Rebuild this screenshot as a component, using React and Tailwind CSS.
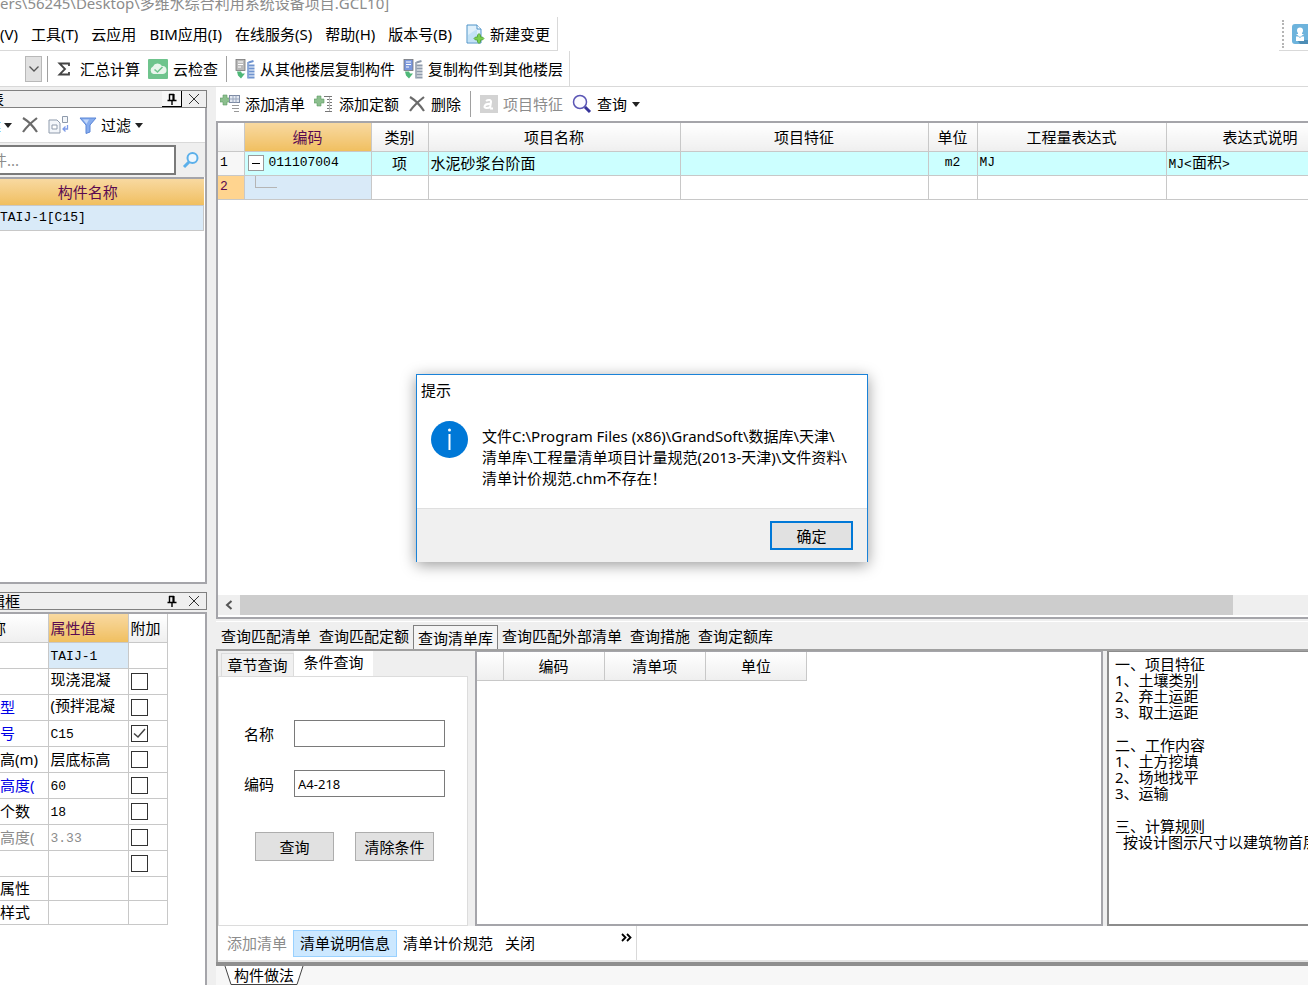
import React, { useState } from "react";
import clsx from "clsx";

const MENU_LEFT = ["工具(T)", "云应用", "BIM应用(I)", "在线服务(S)", "帮助(H)", "版本号(B)"];

const GRID_COLUMNS = [
  { title: "编码", width: 127, active: true },
  { title: "类别", width: 57 },
  { title: "项目名称", width: 252 },
  { title: "项目特征", width: 248 },
  { title: "单位", width: 49 },
  { title: "工程量表达式", width: 189 },
  { title: "表达式说明", width: 188 },
];

const PROPERTIES = [
  { name: "", value: "TAIJ-1", selected: true },
  { name: "", value: "现浇混凝", extra: false, wrapped: true },
  { name: "型", value: "(预拌混凝", extra: false, link: true, wrapped: true },
  { name: "号", value: "C15", extra: true, link: true },
  { name: "高(m)", value: "层底标高", extra: false },
  { name: "高度(", value: "60", extra: false, link: true },
  { name: "个数", value: "18", extra: false },
  { name: "高度(", value: "3.33", extra: false, muted: true },
  { name: "", value: "", extra: false },
  { name: "属性", value: "", short: true },
  { name: "样式", value: "", short: true },
];

const QUERY_TABS = ["查询匹配清单", "查询匹配定额", "查询清单库", "查询匹配外部清单", "查询措施", "查询定额库"];

const NOTES = [
  ["一、项目特征", "1、土壤类别", "2、弃土运距", "3、取土运距"],
  ["二、工作内容", "1、土方挖填", "2、场地找平", "3、运输"],
];

const MONO = "font-['Liberation_Mono','Noto_Sans_CJK_SC',monospace]";

/* ---------- icons ---------- */

const NewDocIcon = () => (
  <svg width="20" height="20" viewBox="0 0 20 20">
    <path d="M2 1h10l4 4v14H2z" fill="#dff0fb" stroke="#4f93c8" />
    <path d="M12 1v4h4" fill="#fff" stroke="#4f93c8" />
    <path d="M3 11l9-6v13H3z" fill="#c3e2f6" />
    <path d="M14 9.500l1.500 1.500v2h2l1.500 1.500-1.500 1.500h-2v2L14 19.500 12.500 18v-2h-2L9 14.500l1.500-1.500h2v-2z" fill="#7ccf4e" stroke="#4a9e33" strokeWidth=".8" />
  </svg>
);

const CloudCheckIcon = () => (
  <svg width="20" height="20" viewBox="0 0 20 20">
    <rect width="20" height="20" rx="1" fill="#6fc48d" />
    <path d="M5.500 15a4 4 0 0 1-.5-7.500A5 5 0 0 1 14 7a4 4 0 0 1 1 8z" fill="#e9f5ec" />
    <path d="M6.500 10.500l3 2.500 5-5" fill="none" stroke="#6fc48d" strokeWidth="1.600" />
  </svg>
);

const CopyFromIcon = ({ page, stack }) => (
  <svg width="20" height="20" viewBox="0 0 20 20">
    <rect x="1" y=".5" width="9" height="11" fill={page} stroke="#777" strokeWidth=".8" />
    <path d="M3 3h5M3 5.500h5M3 8h3" stroke="#fff" />
    <path d="M2 12.500h4l1 2h3l-4 5-3-3z" fill="#4fb878" />
    <path d="M13.500 3.500l5-1.500M13.500 6.500h6M13.500 9.500h6M13.500 12.500h6M13.500 15.500h6M13.500 18.500h6" stroke={stack} strokeWidth="2" />
    <path d="M13 3v16.500" stroke={stack} strokeWidth="1.500" />
  </svg>
);

const AddListIcon = () => (
  <svg width="20" height="20" viewBox="0 0 20 20">
    <path d="M3 1h4v3h3v4H7v3H3V8H0V4h3z" fill="#8cbf8e" stroke="#5f9a66" strokeWidth=".6" />
    <rect x="9.500" y="1.500" width="10" height="7" fill="#e4e9f2" stroke="#7d8aa3" />
    <path d="M9.500 5h10M13 1.500v7M16 1.500v7" stroke="#9aa7bd" />
    <path d="M12 11.500h7M12 14.500h7M14 17.500h5" stroke="#999" />
  </svg>
);

const AddQuotaIcon = () => (
  <svg width="20" height="20" viewBox="0 0 20 20">
    <path d="M3 2h4v3h3v4H7v3H3V9H0V5h3z" fill="#8cbf8e" stroke="#5f9a66" strokeWidth=".6" />
    <path d="M10 2.500h8M13 5.500h5M13 8.500h5M13 11.500h5M13 14.500h5M11 17.500h7" stroke="#777" />
    <path d="M15.500 3v14" stroke="#bbb" />
  </svg>
);

const CrossIcon = () => (
  <svg width="18" height="18" viewBox="0 0 18 18">
    <path d="M2 2c5 3 10 8 14 14M16 2C11 6 6 10 2 16" fill="none" stroke="#6b6b6b" strokeWidth="2.200" />
  </svg>
);

const FeatureIcon = () => (
  <svg width="18" height="18" viewBox="0 0 18 18">
    <rect width="18" height="18" fill="#d3d3d3" />
    <path d="M6 6c2-1.500 5.500-1.500 5 1l-1 6.500M11 9c-4-.5-6 .8-6.500 2.500s3.500 2.500 6 0M10 13.500h3" fill="none" stroke="#fff" strokeWidth="2" />
  </svg>
);

const MagnifierIcon = () => (
  <svg width="20" height="20" viewBox="0 0 20 20">
    <circle cx="8" cy="8" r="6.500" fill="#fbfbff" stroke="#5a55b5" strokeWidth="1.500" />
    <path d="M13 13l5 5" stroke="#37349a" strokeWidth="3" />
  </svg>
);

const SearchIcon = () => (
  <svg width="18" height="18" viewBox="0 0 18 18">
    <circle cx="10.500" cy="7" r="5" fill="#eef7fe" stroke="#5cb0ea" strokeWidth="2" />
    <path d="M7 11l-5 5" stroke="#5cb0ea" strokeWidth="3" />
  </svg>
);

const CopyPagesIcon = () => (
  <svg width="22" height="20" viewBox="0 0 22 20">
    <path d="M1 5h8l3 3v10H1z" fill="#f3f6fa" stroke="#8f9bac" />
    <path d="M4 10h5v4H4z" fill="#fff" stroke="#8f9bac" />
    <path d="M14.500 1.500h5v6h-5z" fill="#f3f6fa" stroke="#8f9bac" />
    <path d="M19.500 10v4h-4M17.500 11.500L15 14l2.500 2.500" fill="none" stroke="#7d9be8" strokeWidth="1.300" />
  </svg>
);

const FunnelIcon = () => (
  <svg width="18" height="18" viewBox="0 0 18 18">
    <path d="M1 2h16l-6 7v7l-4 1.500V9z" fill="#86acee" stroke="#5b86d6" />
    <path d="M4 3.500h6L7.500 8z" fill="#c4d8fa" />
  </svg>
);

const PinIcon = () => (
  <svg width="10" height="12" viewBox="0 0 10 12">
    <path d="M2.500 1v6M2 1.500h5M.5 7.500h9M5 8v4" fill="none" stroke="#000" strokeWidth="1.400" />
    <path d="M6.500 1v6" stroke="#000" strokeWidth="2.200" />
  </svg>
);

const CloseIcon = () => (
  <svg width="10" height="10" viewBox="0 0 10 10">
    <path d="M0 0l10 10M10 0L0 10" stroke="#333" />
  </svg>
);

const CaretIcon = () => (
  <svg width="8" height="5" viewBox="0 0 8 5">
    <path d="M0 0h8L4 5z" fill="#222" />
  </svg>
);

const SigmaIcon = () => (
  <svg width="19" height="14" viewBox="0 0 19 14">
    <path d="M13 4V1.500H3.500L9 7l-5.500 5.500H13V10" fill="none" stroke="#444" strokeWidth="1.800" />
  </svg>
);

const DownloadIcon = () => (
  <svg width="20" height="20" viewBox="0 0 20 20" className="shrink-0">
    <rect width="20" height="20" rx="3" fill="#6db3dc" />
    <path d="M5 16h12l3 4H8z" fill="#4d8db5" />
    <circle cx="8" cy="6.500" r="3" fill="#fff" />
    <path d="M6 7h4v3h2l-4 3-4-3h2zM4 12.500h2.500L8 14l1.500-1.500H12V17H4z" fill="#fff" />
  </svg>
);

/* ---------- shared bits ---------- */

const ToolButton = ({ icon, children, className, disabled }) => (
  <button disabled={disabled} className={clsx("flex shrink-0 items-center gap-[5px] whitespace-nowrap", className)}>
    {icon}
    <span>{children}</span>
  </button>
);

const Separator = () => <div className="h-[26px] w-px shrink-0 bg-[#a0a0a0]" />;

const PanelHeader = ({ children, raised }) => (
  <div className="flex h-[18px] shrink-0 items-center justify-between border border-l-0 border-[#808080] bg-[#efefef]">
    <div className="flex h-4 items-center overflow-hidden leading-4 whitespace-nowrap">{children}</div>
    <div className="flex h-full items-center">
      <button
        aria-label="固定"
        className={clsx("flex h-full w-5 items-center justify-center", raised && "border-r border-b border-black bg-[#f7f7f7]")}
      >
        <PinIcon />
      </button>
      <button aria-label="关闭面板" className="flex h-full w-6 items-center justify-center">
        <CloseIcon />
      </button>
    </div>
  </div>
);

/* ---------- top bars ---------- */

const TopBars = () => (
  <header className="shrink-0 bg-white">
    <div className="mb-1 flex h-[13px] items-end overflow-hidden leading-5 whitespace-nowrap text-[#8c8c8c]">
      ers\56245\Desktop\多维水综合利用系统设备项目.GCL10]
    </div>
    <div className="flex h-[34px] justify-between">
      <nav className="flex items-center gap-[13px] border-r border-b border-[#d9d9d9] pr-[7px] whitespace-nowrap">
        <button>(V)</button>
        {MENU_LEFT.map((item) => (
          <button key={item}>{item}</button>
        ))}
        <ToolButton icon={<NewDocIcon />}>新建变更</ToolButton>
      </nav>
      <div className="flex w-[29px] items-center gap-2 overflow-hidden border-b border-[#d9d9d9] pl-[3px]">
        <div className="h-7 shrink-0 border-l-2 border-dotted border-[#b5b5b5]" />
        <DownloadIcon />
      </div>
    </div>
    <div className="flex h-9 border-b border-[#d9d9d9]">
      <div className="flex items-center gap-2 border-r border-[#d9d9d9] pr-[6px]">
        <div className="flex items-center gap-[5px]">
          <button aria-label="展开" className="ml-[25px] flex h-[26px] w-[17px] items-center justify-center border border-[#b8b8b8] bg-[#e1e1e1]">
            <svg width="10" height="6" viewBox="0 0 10 6">
              <path d="M.5.5L5 5 9.500.5" fill="none" stroke="#555" strokeWidth="1.300" />
            </svg>
          </button>
          <Separator />
        </div>
        <ToolButton icon={<SigmaIcon />}>汇总计算</ToolButton>
        <ToolButton icon={<CloudCheckIcon />}>云检查</ToolButton>
        <Separator />
        <ToolButton icon={<CopyFromIcon page="#b9b9b9" stack="#6f93cf" />}>从其他楼层复制构件</ToolButton>
        <ToolButton icon={<CopyFromIcon page="#7a97dc" stack="#8f9bab" />}>复制构件到其他楼层</ToolButton>
      </div>
    </div>
  </header>
);

/* ---------- left side ---------- */

const ComponentPanel = () => (
  <section className="flex flex-1 flex-col overflow-hidden">
    <PanelHeader raised>
      <span className="flex w-1 justify-end overflow-hidden">表</span>
    </PanelHeader>
    <div className="flex flex-1 flex-col border-r-2 border-b-2 border-[#a5a5aa] bg-white">
      <div className="flex h-[35px] items-center gap-[9px] border-b border-[#d9d9d9]">
        <button className="flex items-center gap-[3px]">
          <span className="flex w-px justify-end overflow-hidden text-[#1b6fb5]">建</span>
          <CaretIcon />
        </button>
        <button aria-label="删除构件">
          <CrossIcon />
        </button>
        <button aria-label="复制构件">
          <CopyPagesIcon />
        </button>
        <button className="flex items-center gap-1">
          <FunnelIcon />
          <span>过滤</span>
          <CaretIcon />
        </button>
      </div>
      <div className="flex h-[34px] items-center bg-[#efefef]">
        <div className="flex h-[30px] flex-1 items-center overflow-hidden border-2 border-l-0 border-[#7a7a7a] bg-white">
          <input
            aria-label="搜索构件"
            placeholder="件..."
            className="-ml-2 w-full min-w-0 outline-none placeholder:text-[#8c8c8c]"
          />
        </div>
        <button aria-label="搜索" className="flex w-[29px] items-center justify-center">
          <SearchIcon />
        </button>
      </div>
      <table className="w-[204px] table-fixed border-collapse border-t-2 border-[#a5a5aa]">
        <thead>
          <tr className="h-[27px]">
            <th className="bg-linear-to-b from-[#f8d9a0] to-[#f0bf5f] pr-7 font-normal text-[#5a0a50]">构件名称</th>
          </tr>
        </thead>
        <tbody>
          <tr className="h-[25px]">
            <td className={clsx("border border-l-0 border-[#c8c8c8] bg-[#d9eaf8] text-[13px]", MONO)}>TAIJ-1[C15]</td>
          </tr>
        </tbody>
      </table>
    </div>
  </section>
);

const PropertyPanel = () => (
  <section className="flex h-[393px] shrink-0 flex-col">
    <PanelHeader>
      <span className="flex w-[20px] justify-end overflow-hidden">辑框</span>
    </PanelHeader>
    <div className="mt-[2px] flex-1 border-t-2 border-r-2 border-[#a5a5aa] bg-white">
      <table className="w-[167px] table-fixed border-collapse">
        <colgroup>
          <col className="w-12" />
          <col className="w-20" />
          <col className="w-[39px]" />
        </colgroup>
        <thead>
          <tr className="h-7">
            <th className="border-r border-b border-[#c8c8c8] bg-linear-to-b from-white to-[#efefef] font-normal">
              <span className="flex w-[6px] justify-end overflow-hidden">称</span>
            </th>
            <th className="border border-t-0 border-[#c8c8c8] bg-linear-to-b from-[#f8d9a0] to-[#f0bf5f] pl-[2px] text-left font-normal text-[#5a0a50]">
              属性值
            </th>
            <th className="border border-t-0 border-[#c8c8c8] bg-linear-to-b from-white to-[#efefef] pl-[2px] text-left font-normal">附加</th>
          </tr>
        </thead>
        <tbody>
          {PROPERTIES.map((row, i) => (
            <tr key={i} className={row.short ? "h-6" : "h-[26px]"}>
              <td
                className={clsx(
                  "overflow-hidden border-r border-b border-[#c8c8c8] p-0 leading-5 whitespace-nowrap",
                  row.link && "text-[#0000e6]",
                  row.muted && "text-[#8c8c8c]",
                )}
              >
                {row.name}
              </td>
              <td
                className={clsx(
                  "overflow-hidden border border-[#c8c8c8] p-0 pl-[2px] leading-5 whitespace-nowrap",
                  row.selected && "bg-[#d9eaf8]",
                  row.muted && "text-[#8c8c8c]",
                  row.wrapped && "align-top",
                )}
              >
                <span className={/^[\x20-\x7e]*$/.test(row.value) ? `${MONO} text-[13px]` : ""}>{row.value}</span>
              </td>
              <td className="border border-[#c8c8c8] p-0 pl-[2px]">
                {row.extra !== undefined && (
                  <div className="grid">
                    <input
                      type="checkbox"
                      aria-label={`附加 ${row.value}`}
                      defaultChecked={row.extra}
                      className="peer col-start-1 row-start-1 size-[17px] appearance-none border border-[#333] bg-white"
                    />
                    <svg
                      width="17"
                      height="17"
                      viewBox="0 0 17 17"
                      className="pointer-events-none col-start-1 row-start-1 hidden peer-checked:block"
                    >
                      <path d="M3 8.500L7 12l7-8" fill="none" stroke="#444" strokeWidth="1.500" />
                    </svg>
                  </div>
                )}
              </td>
            </tr>
          ))}
        </tbody>
      </table>
    </div>
  </section>
);

/* ---------- main grid ---------- */

const GridToolbar = () => (
  <div className="flex h-[34px] shrink-0 items-center gap-[9px] bg-white pl-1">
    <ToolButton icon={<AddListIcon />}>添加清单</ToolButton>
    <ToolButton icon={<AddQuotaIcon />}>添加定额</ToolButton>
    <ToolButton icon={<CrossIcon />}>删除</ToolButton>
    <Separator />
    <ToolButton icon={<FeatureIcon />} disabled className="text-[#8c8c8c]">
      项目特征
    </ToolButton>
    <button className="flex items-center gap-[5px]">
      <MagnifierIcon />
      <span>查询</span>
      <CaretIcon />
    </button>
  </div>
);

const ListGrid = () => {
  const cell = "overflow-hidden border border-[#c8c8c8] p-0 px-[2px] whitespace-nowrap";

  return (
    <div className="flex flex-1 flex-col overflow-hidden border-y-2 border-l-2 border-[#a5a5aa] bg-white">
      <div className="flex-1 overflow-hidden">
        <table className="w-[1136px] table-fixed border-collapse">
          <colgroup>
            <col className="w-[26px]" />
            {GRID_COLUMNS.map((col) => (
              <col key={col.title} style={{ width: col.width }} />
            ))}
          </colgroup>
          <thead>
            <tr className="h-7">
              <th className="border-b border-[#c8c8c8] bg-linear-to-b from-white to-[#efefef]" />
              {GRID_COLUMNS.map((col) => (
                <th
                  key={col.title}
                  className={clsx(
                    "border border-t-0 border-[#c8c8c8] bg-linear-to-b font-normal",
                    col.active ? "from-[#f8d9a0] to-[#f0bf5f] text-[#5a0a50]" : "from-white to-[#efefef]",
                  )}
                >
                  {col.title}
                </th>
              ))}
            </tr>
          </thead>
          <tbody>
            <tr className="h-6 bg-[#ccffff]">
              <td className={clsx(cell, MONO, "border-l-0 bg-[#f7f7f7] text-[13px]")}>1</td>
              <td className={cell}>
                <div className="flex items-center gap-[5px] pl-px">
                  <button aria-label="折叠" className="flex size-4 items-center justify-center border border-[#999] bg-white">
                    <span className="h-px w-2 bg-black" />
                  </button>
                  <span className={`${MONO} text-[13px]`}>011107004</span>
                </div>
              </td>
              <td className={clsx(cell, "text-center")}>项</td>
              <td className={cell}>水泥砂浆台阶面</td>
              <td className={cell} />
              <td className={clsx(cell, MONO, "text-center text-[13px]")}>m2</td>
              <td className={clsx(cell, MONO, "text-[13px]")}>MJ</td>
              <td className={cell}>
                <span className={`${MONO} text-[13px]`}>MJ&lt;</span>面积<span className={`${MONO} text-[13px]`}>&gt;</span>
              </td>
            </tr>
            <tr className="h-6">
              <td className={clsx(cell, MONO, "border-l-0 bg-[#ffd48f] text-[13px] text-[#5a0a50]")}>2</td>
              <td className={clsx(cell, "bg-[#d9eaf8] align-top")}>
                <div className="ml-2 h-3 w-[22px] border-b border-l border-[#b5b5b5]" />
              </td>
              <td className={cell} />
              <td className={cell} />
              <td className={cell} />
              <td className={cell} />
              <td className={cell} />
              <td className={cell} />
            </tr>
          </tbody>
        </table>
      </div>
      <div className="mb-[2px] flex h-5 shrink-0 bg-[#efefef]">
        <button aria-label="向左滚动" className="flex w-[22px] items-center justify-center">
          <svg width="8" height="10" viewBox="0 0 8 10">
            <path d="M6.500 1L2 5l4.500 4" fill="none" stroke="#555" strokeWidth="2" />
          </svg>
        </button>
        <div className="mr-[75px] flex-1 bg-[#cdcdcd]" />
      </div>
    </div>
  );
};

/* ---------- query area ---------- */

const ConditionForm = () => {
  const [name, setName] = useState("");
  const [code, setCode] = useState("A4-218");
  const field = "h-[27px] w-[151px] border border-[#7a7a7a] bg-white px-[3px] outline-none";
  const button = "h-[29px] w-[79px] border border-[#adadad] bg-[#e1e1e1]";

  return (
    <div className="flex w-[250px] shrink-0 flex-col">
      <div className="flex items-end pl-[3px]">
        <button className="h-[23px] w-[73px] border border-b-0 border-[#dcdcdc] bg-[#f0f0f0] leading-5">章节查询</button>
        <button className="h-[25px] w-[79px] bg-white pb-1 leading-5">条件查询</button>
      </div>
      <form className="flex-1 border border-[#dcdcdc] bg-white pt-[43px] pl-[25px]" onSubmit={(e) => e.preventDefault()}>
        <div className="flex items-center gap-5">
          <label htmlFor="query-name">名称</label>
          <input id="query-name" className={field} value={name} onChange={(e) => setName(e.target.value)} />
        </div>
        <div className="mt-[23px] flex items-center gap-5">
          <label htmlFor="query-code">编码</label>
          <input id="query-code" className={clsx(field, "text-[13px]")} value={code} onChange={(e) => setCode(e.target.value)} />
        </div>
        <div className="mt-[35px] flex gap-[21px] pl-[11px]">
          <button className={button}>查询</button>
          <button type="button" className={button}>
            清除条件
          </button>
        </div>
      </form>
    </div>
  );
};

const ResultTable = () => (
  <div className="ml-[7px] min-w-0 flex-1 border-2 border-t border-[#a5a5aa] bg-white">
    <table className="w-[330px] table-fixed border-collapse">
      <thead>
        <tr className="h-7 bg-linear-to-b from-white to-[#efefef]">
          <th className="w-[26px] border border-t-0 border-l-0 border-[#c8c8c8]" />
          <th className="border border-t-0 border-[#c8c8c8] font-normal">编码</th>
          <th className="border border-t-0 border-[#c8c8c8] font-normal">清单项</th>
          <th className="border border-t-0 border-[#c8c8c8] font-normal">单位</th>
        </tr>
      </thead>
    </table>
  </div>
);

const NotesPanel = () => (
  <div className="ml-1 flex w-[201px] shrink-0 flex-col gap-[17px] overflow-hidden border-2 border-t border-r-0 border-[#8c8c8c] bg-white pt-1 pl-[6px] leading-4 whitespace-nowrap">
    {NOTES.map((lines) => (
      <div key={lines[0]}>
        {lines.map((line) => (
          <p key={line}>{line}</p>
        ))}
      </div>
    ))}
    <div>
      <p>三、计算规则</p>
      <p className="pl-2">按设计图示尺寸以建筑物首层</p>
    </div>
  </div>
);

const QueryArea = () => {
  const [tab, setTab] = useState("查询清单库");

  return (
    <section className="flex h-[366px] shrink-0 flex-col">
      <div className="mt-[2px] flex h-7 shrink-0 items-center border-t border-white pl-px">
        {QUERY_TABS.map((t) => (
          <button
            key={t}
            onClick={() => setTab(t)}
            className={clsx(
              "px-1 leading-5 whitespace-nowrap",
              t === tab && "h-6 self-end border border-b-0 border-[#808080] bg-[#f4f4f4]",
            )}
          >
            {t}
          </button>
        ))}
      </div>
      <div className="flex min-h-0 flex-1 flex-col border-t-2 border-l-2 border-[#a0a0a0]">
        <div className="flex min-h-0 flex-1">
          <ConditionForm />
          <ResultTable />
          <NotesPanel />
        </div>
        <div className="flex h-[36px] shrink-0 border-b-2 border-[#e5e5e5] bg-white">
          <div className="flex w-[419px] items-center border-r border-[#d9d9d9] pr-1 pl-[9px]">
            <button disabled className="text-[#8c8c8c]">
              添加清单
            </button>
            <button className="mx-[6px] h-[27px] border border-[#99d1ff] bg-[#cce8ff] px-[6px]">清单说明信息</button>
            <button>清单计价规范</button>
            <button className="ml-3">关闭</button>
            <button aria-label="更多" className="ml-auto self-start pt-[7px]">
              <svg width="11" height="9" viewBox="0 0 11 9">
                <path d="M1 1l3.500 3.500L1 8M6 1l3.500 3.500L6 8" fill="none" stroke="#000" strokeWidth="1.800" />
              </svg>
            </button>
          </div>
        </div>
      </div>
      <div className="flex h-[23px] shrink-0 border-t-4 border-[#8f8f8f] bg-[#f7f7f7] pl-2">
        <button className="relative h-[19px] w-[80px] leading-[19px]">
          <svg width="80" height="19" viewBox="0 0 80 19" className="absolute inset-0">
            <path d="M1 0l6 18.500h66L79 0" fill="#fff" stroke="#444" />
          </svg>
          <span className="relative">构件做法</span>
        </button>
      </div>
    </section>
  );
};

/* ---------- message box ---------- */

const MessageBox = ({ onClose }) => (
  <div
    role="dialog"
    aria-label="提示"
    className="absolute top-[374px] left-[416px] w-[452px] border border-b-0 border-[#1a82d8] bg-white shadow-[0_3px_14px_rgba(0,0,0,0.4)]"
  >
    <div className="px-1 pt-[5px] leading-5">提示</div>
    <div className="flex gap-[14px] pt-[21px] pb-[19px] pl-[14px]">
      <svg width="37" height="37" viewBox="0 0 37 37" className="shrink-0">
        <circle cx="18.500" cy="18.500" r="18.500" fill="#0078d7" />
        <circle cx="18.500" cy="9" r="1.500" fill="#fff" />
        <path d="M18.500 13v16" stroke="#fff" strokeWidth="2" />
      </svg>
      <p className="pt-[5px] leading-[21px] whitespace-nowrap">
        文件C:\Program Files (x86)\GrandSoft\数据库\天津\
        <br />
        清单库\工程量清单项目计量规范(2013-天津)\文件资料\
        <br />
        清单计价规范.chm不存在！
      </p>
    </div>
    <div className="flex h-[54px] items-center justify-end border-t border-[#dfdfdf] bg-[#f0f0f0] pr-[14px]">
      <button onClick={onClose} className="h-[29px] w-[83px] border-2 border-[#0078d7] bg-[#e1e1e1]">
        确定
      </button>
    </div>
  </div>
);

const App = () => {
  const [showMessage, setShowMessage] = useState(true);

  return (
    <div className="relative flex h-screen flex-col overflow-hidden bg-[#efefef] font-['Noto_Sans','Noto_Sans_CJK_SC',sans-serif] text-[15px] leading-5 text-black">
      <TopBars />
      <main className="flex min-h-0 flex-1">
        <aside className="flex w-[207px] shrink-0 flex-col gap-2 pt-[3px]">
          <ComponentPanel />
          <PropertyPanel />
        </aside>
        <div className="ml-[9px] flex min-w-0 flex-1 flex-col">
          <GridToolbar />
          <ListGrid />
          <QueryArea />
        </div>
      </main>
      {showMessage && <MessageBox onClose={() => setShowMessage(false)} />}
    </div>
  );
};

export default App;
